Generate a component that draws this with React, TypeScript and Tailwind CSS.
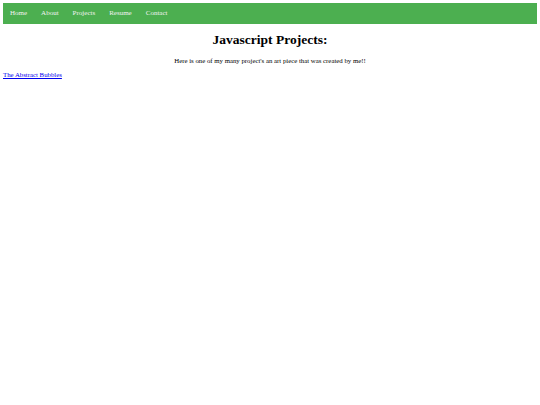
export default function App() {
  const links = ['Home', 'About', 'Projects', 'Resume', 'Contact'];
  return (
    <div className="min-h-screen bg-white p-[3px] font-['Liberation_Serif',serif] text-black">
      <nav className="flex h-[21px] items-center bg-[#4caf50]">
        {links.map((l) => (
          <a key={l} href="#" className="px-[7px] text-[7px] leading-none text-[#f2f2f2]">
            {l}
          </a>
        ))}
      </nav>
      <h1 className="mt-[9px] text-center text-[13.5px] font-bold leading-none">Javascript Projects:</h1>
      <p className="mt-[11px] text-center text-[6.8px] leading-none">
        Here is one of my many project's an art piece that was created by me!!
      </p>
      <a href="#" className="mt-[8px] block text-[6.8px] leading-none text-[#0000ee] underline">
        The Abstract Bubbles
      </a>
    </div>
  );
}
